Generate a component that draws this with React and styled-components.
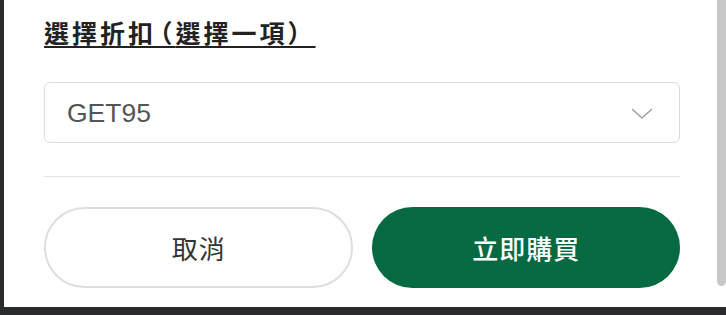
import styled, { createGlobalStyle } from "styled-components";

const GlobalStyle = createGlobalStyle`
  html, body {
    margin: 0;
    padding: 0;
    background: #2a2b2d;
  }
  body {
    font-family: "Noto Sans CJK TC", "Noto Sans", sans-serif;
  }
`;

const CJK = `"Noto Sans CJK TC", "Noto Sans CJK SC", sans-serif`;

export default function App() {
  return (
    <>
      <GlobalStyle />
      <Frame>
        <Content>
          {/* discount picker */}
          <Title>
            選擇折<Spaced>扣</Spaced>
            <Paren>（</Paren>選擇一項）
          </Title>
          <Select>
            <SelectValue>GET95</SelectValue>
            <svg width="22" height="11" viewBox="0 0 22 11" fill="none">
              <polyline
                points="1,1 11,10 21,1"
                stroke="#9a9a9a"
                strokeWidth="1.3"
                strokeLinejoin="round"
              />
            </svg>
          </Select>
          <Divider />
          <ButtonRow>
            <Button>取消</Button>
            <Button $primary>立即購買</Button>
          </ButtonRow>
        </Content>
        <ScrollTrack>
          <ScrollThumb />
        </ScrollTrack>
      </Frame>
    </>
  );
}

const Frame = styled.div`
  display: flex;
  height: 307px;
  margin-left: 4px;
  background: #fff;
`;

const Content = styled.div`
  flex: 1;
  display: flex;
  flex-direction: column;
  padding: 16px 37px 19px 40px;
  box-sizing: border-box;
`;

const Title = styled.h2`
  margin: 0;
  font-family: ${CJK};
  font-size: 25px;
  line-height: 32px;
  font-weight: 700;
  letter-spacing: 3px;
  color: #222;
  text-decoration: underline;
  text-decoration-thickness: 2px;
  text-underline-offset: 3px;
  align-self: flex-start;
`;

const Spaced = styled.span`
  letter-spacing: 7px;
`;

const Paren = styled.span`
  font-feature-settings: "halt";
`;

const Select = styled.div`
  margin-top: 34px;
  height: 61px;
  box-sizing: border-box;
  border: 1.5px solid #dcdcdc;
  border-radius: 6px;
  display: flex;
  align-items: center;
  justify-content: space-between;
  padding: 2px 26px 0 22px;
`;

const SelectValue = styled.span`
  font-family: "Liberation Sans", Arial, sans-serif;
  font-size: 26.5px;
  color: #555;
`;

const Divider = styled.hr`
  margin: 33px 0 0;
  border: 0;
  border-top: 1.5px solid #e4e4e4;
`;

const ButtonRow = styled.div`
  margin-top: 30px;
  display: grid;
  grid-template-columns: 1fr 1fr;
  gap: 19px;
`;

const Button = styled.button`
  height: 81px;
  border-radius: 41px;
  box-sizing: border-box;
  font-family: ${CJK};
  font-size: 26px;
  letter-spacing: 1px;
  text-indent: 1px;
  cursor: pointer;
  border: ${(p) => (p.$primary ? "none" : "2px solid #dedede")};
  background: ${(p) => (p.$primary ? "#056a42" : "#fff")};
  color: ${(p) => (p.$primary ? "#fff" : "#333")};
  font-weight: ${(p) => (p.$primary ? 500 : 400)};
`;

const ScrollTrack = styled.div`
  width: 9px;
  display: flex;
  flex-direction: column;
`;

const ScrollThumb = styled.div`
  height: 286px;
  background: #c8c8c8;
  border-radius: 0 0 4.5px 4.5px;
`;
